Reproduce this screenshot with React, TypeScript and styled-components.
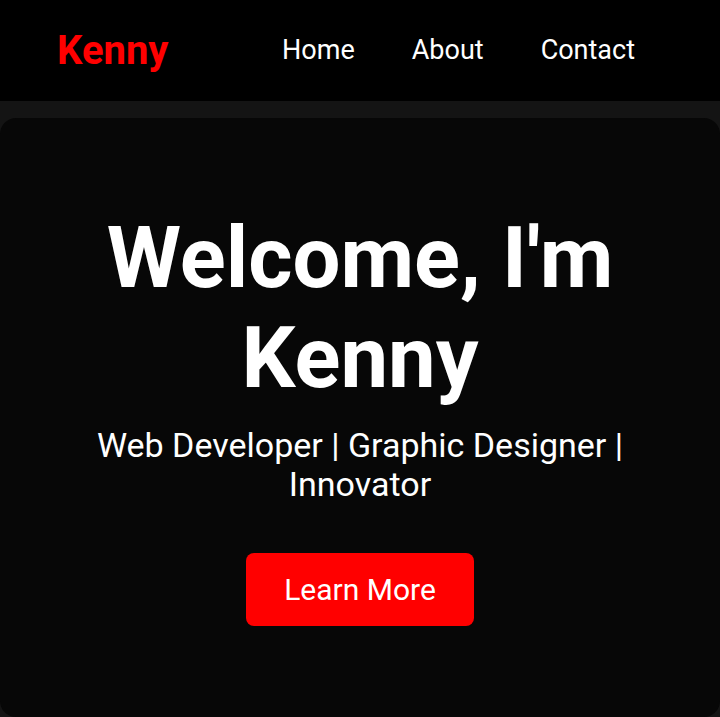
import React from "react";
import styled, { createGlobalStyle } from "styled-components";

const Global = createGlobalStyle`
  html, body { margin: 0; padding: 0; background: #141414; }
  body { font-family: Roboto, "Noto Sans", Arial, sans-serif; color: #fff; }
  * { box-sizing: border-box; }
`;

const Page = styled.div`
  min-height: 717px;
  background: #141414;
  display: flex;
  flex-direction: column;
`;

const Header = styled.header`
  height: 101px;
  background: #000;
  display: flex;
  align-items: center;
  justify-content: space-between;
  padding: 0 85px 0 57px;
`;

const Logo = styled.div`
  color: #ff0000;
  font-weight: 700;
  font-size: 40px;
  line-height: 1;
`;

const Nav = styled.nav`
  display: flex;
  gap: 57px;
`;

const NavLink = styled.a`
  color: #fff;
  font-size: 27px;
  text-decoration: none;
  line-height: 1;
`;

const Card = styled.main`
  margin-top: 17px;
  background: #070707;
  border-radius: 16px;
  flex: 1;
  display: flex;
  flex-direction: column;
  align-items: center;
  padding: 90px 60px 0;
  text-align: center;
`;

const Title = styled.h1`
  margin: 0;
  font-size: 85px;
  font-weight: 700;
  line-height: 100px;
  max-width: 540px;
`;

const Subtitle = styled.p`
  margin: 18px 0 0;
  font-size: 34px;
  line-height: 39px;
  max-width: 560px;
`;

const Button = styled.button`
  margin-top: 49px;
  width: 228px;
  height: 73px;
  border: none;
  border-radius: 8px;
  background: #ff0000;
  color: #fff;
  font-family: inherit;
  font-size: 30px;
  cursor: pointer;
`;

export default function App() {
  return (
    <>
      <Global />
      <Page>
        <Header>
          <Logo>Kenny</Logo>
          <Nav>
            <NavLink href="#">Home</NavLink>
            <NavLink href="#">About</NavLink>
            <NavLink href="#">Contact</NavLink>
          </Nav>
        </Header>
        <Card>
          <Title>Welcome, I'm Kenny</Title>
          <Subtitle>Web Developer | Graphic Designer | Innovator</Subtitle>
          <Button>Learn More</Button>
        </Card>
      </Page>
    </>
  );
}
